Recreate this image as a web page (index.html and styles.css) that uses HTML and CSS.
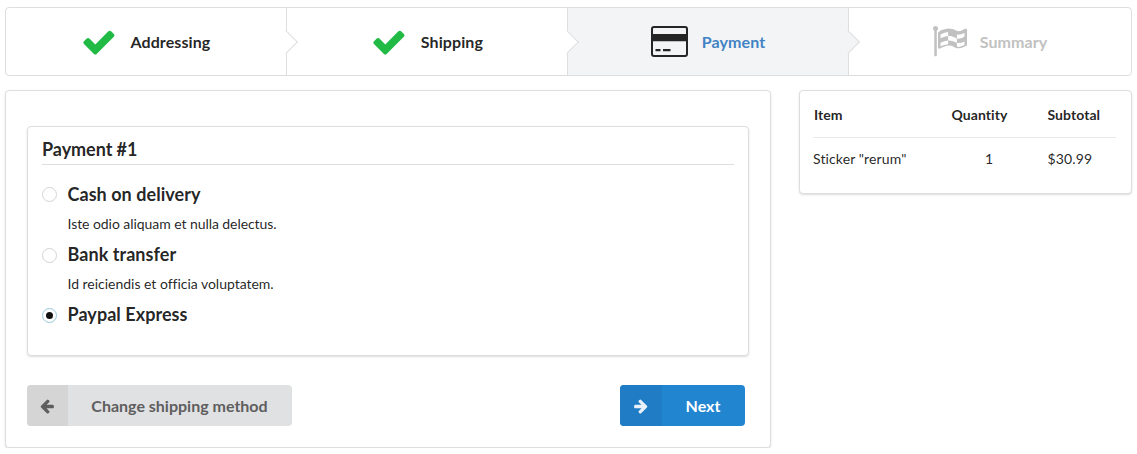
FILE: index.html
```html
<!DOCTYPE html>
<html lang="en">
<head>
<meta charset="utf-8">
<title>Checkout - Payment</title>
<link rel="stylesheet" href="styles.css">
</head>
<body>
<nav class="steps">
  <a class="step completed">
    <svg class="step-icon check" viewBox="0 0 1792 1792"><path d="M1671 566q0 40-28 68l-724 724-136 136q-28 28-68 28t-68-28l-136-136-362-362q-28-28-28-68t28-68l136-136q28-28 68-28t68 28l294 295 656-657q28-28 68-28t68 28l136 136q28 28 28 68z"/></svg>
    <span class="title">Addressing</span>
  </a>
  <a class="step completed">
    <svg class="step-icon check" viewBox="0 0 1792 1792"><path d="M1671 566q0 40-28 68l-724 724-136 136q-28 28-68 28t-68-28l-136-136-362-362q-28-28-28-68t28-68l136-136q28-28 68-28t68 28l294 295 656-657q28-28 68-28t68 28l136 136q28 28 28 68z"/></svg>
    <span class="title">Shipping</span>
  </a>
  <a class="step active">
    <svg class="step-icon card" viewBox="0 0 37 31"><path fill-rule="evenodd" d="M3 0H34Q37 0 37 3V28Q37 31 34 31H3Q0 31 0 28V3Q0 0 3 0ZM3 2Q2 2 2 3V8H35V3Q35 2 34 2ZM2 15.2V28Q2 29 3 29H34Q35 29 35 28V15.2ZM4.5 23H9.500V25.200H4.500ZM12 23H19.500V25.200H12Z"/></svg>
    <span class="title">Payment</span>
  </a>
  <div class="step disabled">
    <svg class="step-icon flag" viewBox="64 0 1728 1536"><path fill-rule="evenodd" d="M832 926v-192q-181 16-384 117v185q205-96 384-110zm0-418v-197q-172 8-384 126v189q215-111 384-118zm832 463v-184q-235 116-384 71v-224q-20-6-39-15-5-3-33-17t-34.500-17-31.500-15-34.500-15.500-32.500-13-36-12.500-35-8.500-39.500-7.500-39.500-4-44-2q-23 0-49 3v222h19q102 0 192.500 29t197.500 82q19 9 39 15v188q42 17 91 17 120 0 293-92zm0-427v-189q-169 91-306 91-45 0-78-8v196q148 42 384-90zm-1344-416q0 35-17.500 64t-46.500 46v1266q0 14-9 23t-23 9h-64q-14 0-23-9t-9-23v-1266q-29-17-46.500-46t-17.500-64q0-53 37.500-90.500t90.500-37.500 90.500 37.500 37.500 90.500zm1472 64v763q0 39-35 57-10 5-17 9-218 116-370 116-88 0-158-35l-28-14q-64-33-99-48t-91-29-114-14q-102 0-235.500 44t-228.500 102q-15 9-33 9-16 0-32-8-32-19-32-56v-742q0-35 31-55 35-21 78.500-42.500t114-52 152.500-49.500 155-19q112 0 209 31t209 86q38 19 89 19 122 0 310-112 22-12 31-17 31-16 62 2 31 20 31 55z"/></svg>
    <span class="title">Summary</span>
  </div>
</nav>
<main class="content">
  <section class="segment checkout">
    <div class="segment payment">
      <h3 class="heading">Payment #1</h3>
      <div class="methods">
        <div class="method">
          <span class="radio"></span>
          <div><div class="name">Cash on delivery</div><p class="description tight">Iste odio aliquam et nulla delectus.</p></div>
        </div>
        <div class="method">
          <span class="radio"></span>
          <div><div class="name">Bank transfer</div><p class="description">Id reiciendis et officia voluptatem.</p></div>
        </div>
        <div class="method">
          <span class="radio checked"></span>
          <div><div class="name">Paypal Express</div></div>
        </div>
      </div>
    </div>
    <div class="actions">
      <a class="button back">
        <span class="button-icon"><svg viewBox="0 0 1792 1792"><path d="M1664 896v128q0 53-32.500 90.500t-84.500 37.500h-704l293 294q38 36 38 90t-38 90l-75 76q-37 37-90 37-52 0-91-37l-651-652q-37-37-37-90 0-52 37-91l651-650q38-38 91-38 52 0 90 38l75 74q38 38 38 91t-38 91l-293 293h704q52 0 84.500 37.500t32.500 90.500z"/></svg></span>
        <span class="button-label">Change shipping method</span>
      </a>
      <button class="button next">
        <span class="button-icon"><svg viewBox="0 0 1792 1792"><path transform="translate(1792 0) scale(-1 1)" d="M1664 896v128q0 53-32.500 90.500t-84.500 37.500h-704l293 294q38 36 38 90t-38 90l-75 76q-37 37-90 37-52 0-91-37l-651-652q-37-37-37-90 0-52 37-91l651-650q38-38 91-38 52 0 90 38l75 74q38 38 38 91t-38 91l-293 293h704q52 0 84.500 37.500t32.500 90.500z"/></svg></span>
        <span class="button-label">Next</span>
      </button>
    </div>
  </section>
  <aside class="segment summary">
    <table class="items">
      <thead><tr><th class="item">Item</th><th class="quantity">Quantity</th><th>Subtotal</th></tr></thead>
      <tbody><tr><td>Sticker "rerum"</td><td class="quantity">1</td><td>$30.99</td></tr></tbody>
    </table>
  </aside>
</main>
</body>
</html>
```
FILE: styles.css
```css
* { box-sizing: border-box; }
body {
  margin: 0;
  padding: 7px 5px 0;
  background: #fff;
  color: rgba(0, 0, 0, .87);
  font: 14px/20px Lato, "Liberation Sans", sans-serif;
}
.steps {
  display: grid;
  grid-template-columns: 281px 281px 281px 1fr;
  height: 69px;
  border: 1px solid #dededf;
  border-radius: 4px;
}
.step {
  position: relative;
  display: flex;
  align-items: center;
  justify-content: center;
  border-right: 1px solid #dededf;
}
.step:last-child { border-right: 0; border-radius: 0 4px 4px 0; }
.step:not(:last-child)::after {
  content: "";
  position: absolute;
  z-index: 1;
  top: 50%;
  right: 0;
  width: 16px;
  height: 16px;
  background: #fff;
  border: solid #dededf;
  border-width: 0 1px 1px 0;
  transform: translate(50%, -50%) rotate(-45deg);
}
.step.active, .step.active::after { background: #f3f4f5; }
.step-icon { flex: none; fill: currentColor; }
.check { width: 35.800px; height: 36px; margin-right: 14px; fill: #21ba45; }
.step:first-child { padding-right: 1px; }
.card { width: 37px; height: 31px; margin-right: 14px; fill: #252525; }
.flag { width: 34px; height: 30.200px; margin-right: 13px; }
.title { font-size: 16px; font-weight: 700; letter-spacing: .08px; }
.active .title { color: #4183c4; }
.disabled { color: #c1c1c1; }
.content {
  display: flex;
  align-items: flex-start;
  justify-content: space-between;
  margin-top: 14px;
}
.segment {
  background: #fff;
  border: 1px solid #dededf;
  border-radius: 4px;
  box-shadow: 0 1px 2px rgba(34, 36, 38, .15);
}
.checkout { width: 766px; height: 358px; padding: 35px 21px 0; }
.payment { height: 230px; padding: 11px 14px 0; }
.heading {
  margin: 0;
  height: 27px;
  border-bottom: 1px solid #dededf;
  font-size: 18px;
  line-height: 23px;
  letter-spacing: -.05px;
}
.methods { padding-top: 14px; }
.method { display: flex; height: 60px; }
.radio {
  display: grid;
  place-items: center;
  width: 15px;
  height: 15px;
  margin: 9px 10.500px 0 0;
  border: 1px solid #d4d4d5;
  border-radius: 50%;
}
.method:first-child .radio { margin-top: 8px; }
.radio.checked { border-color: #96c8da; }
.radio.checked::before {
  content: "";
  width: 7px;
  height: 7px;
  border-radius: 50%;
  background: #111;
}
.name { font-size: 18px; font-weight: 700; line-height: 30px; letter-spacing: .05px; }
.description { margin: 5px 0 0; letter-spacing: -.02px; }
.description.tight { letter-spacing: -.06px; }
.actions { display: flex; justify-content: space-between; margin: 29px 4px 0 0; }
.button {
  display: flex;
  height: 41px;
  padding: 0;
  overflow: hidden;
  border: 0;
  border-radius: 4px;
  font: 700 16px/41px Lato, "Liberation Sans", sans-serif;
}
.button-icon { display: flex; align-items: center; justify-content: center; width: 41px; }
.button-icon svg { width: 16px; height: 16px; fill: currentColor; }
.button-label { flex: 1; padding-right: 1px; text-align: center; }
.back { width: 265px; background: #e0e1e2; color: #5e5e5f; }
.back .button-icon { padding-right: 1px; background: #d5d5d6; }
.next { width: 125px; background: #2185d0; color: #fff; }
.next .button-icon { width: 42px; background: #207dc5; color: #e9f2fa; }
.summary { width: 333px; height: 104px; padding: 0 15px 0 13px; }
.items { width: 100%; table-layout: fixed; border-spacing: 0; }
.items th, .items td { padding: 0; text-align: left; }
.items th { height: 47px; border-bottom: 1px solid #e9e9ea; font-weight: 700; letter-spacing: .06px; }
.items th { padding-top: 1px; }
.items td { height: 41px; letter-spacing: .12px; }
.items .item { width: 129px; padding-left: 1px; }
.items .quantity { width: 75px; text-align: center; }
.items td.quantity { padding-left: 19px; }
.items th.quantity + th, .items td.quantity + td { padding-left: 30.500px; }
```
